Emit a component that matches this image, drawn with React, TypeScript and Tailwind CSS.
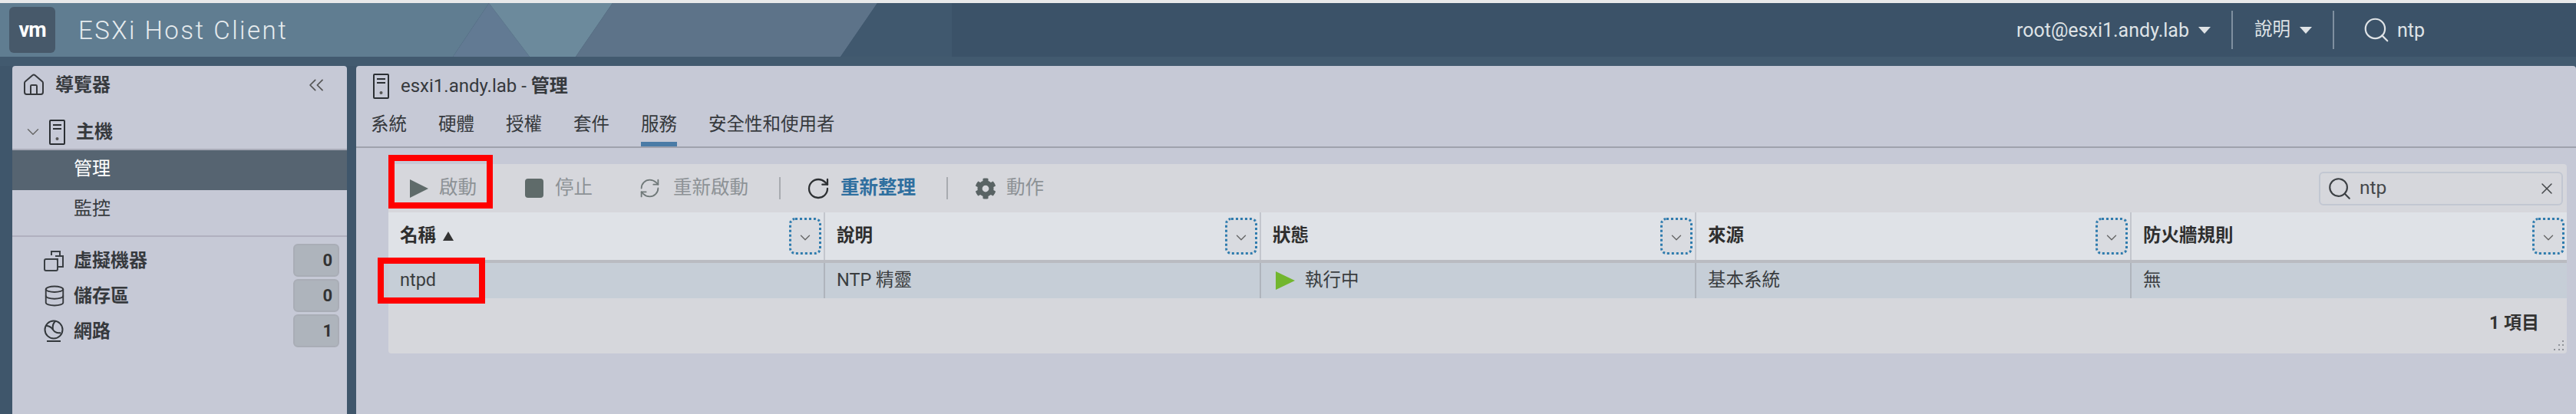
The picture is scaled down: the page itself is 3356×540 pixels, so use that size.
import { ChevronDown, ChevronsLeft, Database, House, RefreshCw, RotateCw, Search, X } from 'lucide-react'
import { FaCog } from 'react-icons/fa'

const FONT = "font-['Roboto','Noto_Sans_CJK_TC',sans-serif]"

function ServerIcon() {
  return (
    <svg width="21" height="33" viewBox="0 0 21 33" fill="none" stroke="#2b2f33" strokeWidth="2">
      <rect x="1" y="1" width="19" height="31" rx="1" />
      <path d="M5 7h11M5 12h11" />
      <circle cx="10.5" cy="25" r="2" fill="#555" stroke="none" />
    </svg>
  )
}

function VmIcon() {
  return (
    <svg width="28" height="28" viewBox="0 0 28 28" fill="none" stroke="#3a3f44" strokeWidth="2">
      <path d="M11 7V2h11v6" />
      <path d="M16 8h10v14h-6" />
      <rect x="2" y="12" width="17" height="15" rx="2" />
      <path d="M10 12h9v9" />
    </svg>
  )
}

function GlobeIcon() {
  return (
    <svg width="28" height="30" viewBox="0 0 28 30" fill="none" stroke="#33383c" strokeWidth="2">
      <circle cx="14" cy="13" r="11.5" />
      <path d="M4 8c5 0 7 2 9 5s5 5 10 4" />
      <path d="M16 2c-3 3-4 6-3 11" />
      <path d="M5 28h18" />
    </svg>
  )
}

function SortBtn() {
  return (
    <div className="flex h-[48px] w-[42px] items-center justify-center rounded-lg border-[3px] border-dotted border-[#2f7cae] bg-[#d9dbe0] pt-[4px]">
      <ChevronDown size={22} strokeWidth={1.5} className="text-[#666]" />
    </div>
  )
}

function HeaderCell({ label, sorted, last }: { label: string; sorted?: boolean; last?: boolean }) {
  return (
    <div className={`flex items-center justify-between pl-[15px] pr-[3px] ${last ? '' : 'border-r-2 border-[#c3c6cd]'}`}>
      <div className="flex items-center gap-[9px] text-[23.5px] leading-none font-bold text-[#2e2e2e]">
        {label}
        {sorted && <span className="h-0 w-0 border-x-[7px] border-b-[12px] border-x-transparent border-b-[#333]" />}
      </div>
      <SortBtn />
    </div>
  )
}

function RowCell({ children, last }: { children: React.ReactNode; last?: boolean }) {
  return (
    <div className={`flex items-center pl-[15px] text-[23.5px] leading-none text-[#3a3d40] ${last ? '' : 'border-r-2 border-[#afb4bc]'}`}>
      {children}
    </div>
  )
}

function NavCount({ icon, label, count }: { icon: React.ReactNode; label: string; count: number }) {
  return (
    <div className="flex h-[43px] items-center pl-[40px] pr-[10px]">
      <div className="flex w-[40px] items-center">{icon}</div>
      <span className="text-[24px] leading-none font-bold text-[#36393d]">{label}</span>
      <div className="ml-auto flex h-[43px] w-[60px] items-center justify-end rounded-md border-2 border-[#a9adb6] bg-[#aeb4bc] pr-[7px] text-[22px] font-bold text-[#333]">
        {count}
      </div>
    </div>
  )
}

export default function App() {
  const tabs = ['系統', '硬體', '授權', '套件', '服務', '安全性和使用者']

  return (
    <div className={`${FONT} flex h-[540px] w-[3356px] flex-col overflow-hidden bg-[#3f566b]`}>
      <div className="h-[4px] bg-[#e8e9ea]" />

      {/* top bar */}
      <header className="relative flex h-[70px] items-center bg-[#3b5268] pl-[12px] text-white">
        <svg className="absolute inset-0" width="3356" height="70" viewBox="0 0 3356 70">
          <polygon points="0,0 637,0 590,70 0,70" fill="#607d91" />
          <polygon points="637,0 690,70 590,70" fill="#627a93" />
          <polygon points="637,0 798,0 750,70 690,70" fill="#6c8a9c" />
          <polygon points="798,0 1143,0 1095,70 750,70" fill="#5d7389" />
          <polygon points="1143,0 1240,0 1240,70 1095,70" fill="#40586e" />
        </svg>
        <div className="relative flex h-[60px] w-[60px] items-center justify-center rounded-md bg-[#47596a] text-[27px] leading-none font-bold tracking-[-1px]">
          vm
        </div>
        <span className="relative ml-[30px] text-[33px] leading-none font-light tracking-[2.5px] text-[#e6ebee]">ESXi Host Client</span>
        <div className="relative ml-auto flex items-center pr-[197px] text-[23.5px] leading-none text-[#dfe3e6]">
          <span className="text-[25px]">root@esxi1.andy.lab</span>
          <span className="ml-[12px] h-0 w-0 border-x-[8px] border-t-[9px] border-x-transparent border-t-[#dfe3e6]" />
          <div className="ml-[27px] h-[50px] w-[2px] bg-[#7f90a0]" />
          <span className="ml-[28px]">說明</span>
          <span className="ml-[12px] h-0 w-0 border-x-[8px] border-t-[9px] border-x-transparent border-t-[#dfe3e6]" />
          <div className="ml-[27px] h-[50px] w-[2px] bg-[#7f90a0]" />
          <Search size={38} strokeWidth={1.4} className="ml-[36px]" />
          <span className="ml-[8px] text-[25px]">ntp</span>
        </div>
      </header>
      <div className="h-[12px] bg-[#425a6f]" />

      <div className="flex flex-1 pl-[16px]">
        {/* navigator */}
        <aside className="w-[436px] rounded-t-sm bg-[#c6c9d6] text-[#36393d]">
          <div className="flex h-[50px] items-center pl-[12px] pr-[24px]">
            <House size={32} strokeWidth={1.5} />
            <span className="ml-[12px] text-[24px] leading-none font-bold">導覽器</span>
            <ChevronsLeft size={32} strokeWidth={1.3} className="ml-auto text-[#555]" />
          </div>
          <div className="flex h-[58px] items-center pl-[14px] pt-[14px]">
            <ChevronDown size={26} strokeWidth={1.3} className="text-[#666]" />
            <div className="ml-[8px]"><ServerIcon /></div>
            <span className="ml-[14px] text-[24px] leading-none font-bold">主機</span>
          </div>
          <div className="flex h-[54px] items-center border-t-2 border-[#a9abb8] bg-[#566471] pb-[5px] pl-[80px] text-[24px] leading-none text-white">管理</div>
          <div className="flex h-[61px] items-center border-b-2 border-[#b0b0bf] pb-[12px] pl-[80px] text-[24px] leading-none">監控</div>
          <div className="mt-[9px] flex flex-col gap-[3px]">
            <NavCount icon={<VmIcon />} label="虛擬機器" count={0} />
            <NavCount icon={<Database size={30} strokeWidth={1.5} />} label="儲存區" count={0} />
            <NavCount icon={<GlobeIcon />} label="網路" count={1} />
          </div>
        </aside>

        {/* main */}
        <main className="relative ml-[12px] flex-1 rounded-t-sm bg-[#c6c9d6] text-[#36393d]">
          <div className="flex h-[50px] items-center pl-[22px] pt-[2px]">
            <ServerIcon />
            <span className="ml-[15px] text-[24px] leading-none">esxi1.andy.lab - <span className="font-bold">管理</span></span>
          </div>
          <nav className="flex h-[55px] gap-[41px] pl-[19px]">
            {tabs.map((t) => (
              <div key={t} className={`flex items-center border-b-[6px] pt-[5px] text-[23.5px] leading-none ${t === '服務' ? 'border-[#4a7ba6]' : 'border-transparent'}`}>
                {t}
              </div>
            ))}
          </nav>
          <div className="h-[2px] bg-[#9fa2ad]" />

          <section className="mt-[21px] ml-[42px] h-[247px] w-[2838px] rounded-sm bg-[#d6d7dc]">
            {/* toolbar */}
            <div className="flex h-[63px] items-center pl-[28px] pr-[5px] text-[24.5px] leading-none text-[#8d9296]">
              <span className="h-0 w-0 border-y-[12px] border-l-[24px] border-y-transparent border-l-[#5f6b6a]" />
              <span className="ml-[14px]">啟動</span>
              <span className="ml-[63px] h-[25px] w-[24px] rounded-sm bg-[#5f6b6a]" />
              <span className="ml-[15px]">停止</span>
              <RefreshCw size={29} strokeWidth={1.5} className="ml-[60px] text-[#6f7878]" />
              <span className="ml-[16px]">重新啟動</span>
              <div className="ml-[40px] h-[29px] w-[2px] bg-[#a8abb0]" />
              <RotateCw size={32} strokeWidth={1.7} className="ml-[33px] text-[#2d3033]" />
              <span className="ml-[13px] font-bold text-[#2f6f9f]">重新整理</span>
              <div className="ml-[40px] h-[29px] w-[2px] bg-[#a8abb0]" />
              <FaCog size={28} className="ml-[35px] text-[#596364]" />
              <span className="ml-[13px]">動作</span>
              <div className="ml-auto flex h-[44px] w-[318px] items-center rounded-md border-2 border-[#c2c7d2] pl-[8px] pr-[7px] text-[#44474a]">
                <Search size={34} strokeWidth={1.5} className="text-[#3c4044]" />
                <span className="ml-[9px]">ntp</span>
                <X size={24} strokeWidth={1.5} className="ml-auto" />
              </div>
            </div>

            {/* grid */}
            <div className="grid h-[66px] grid-cols-[569px_568px_567px_567px_567px] border-b-4 border-[#b9bbc1] bg-[#dfe2e7]">
              <HeaderCell label="名稱" sorted />
              <HeaderCell label="說明" />
              <HeaderCell label="狀態" />
              <HeaderCell label="來源" />
              <HeaderCell label="防火牆規則" last />
            </div>
            <div className="grid h-[46px] grid-cols-[569px_568px_567px_567px_567px] bg-[#c6ced7]">
              <RowCell>ntpd</RowCell>
              <RowCell>NTP 精靈</RowCell>
              <RowCell>
                <span className="ml-[4px] h-0 w-0 border-y-[12px] border-l-[25px] border-y-transparent border-l-[#72b62e]" />
                <span className="ml-[13px]">執行中</span>
              </RowCell>
              <RowCell>基本系統</RowCell>
              <RowCell last>無</RowCell>
            </div>
            <div className="relative flex h-[72px] items-start justify-end pr-[36px] pt-[21px] text-[23px] leading-none font-bold text-[#333]">
              1 項目
              <svg className="absolute right-[3px] bottom-[3px]" width="16" height="14" viewBox="0 0 16 14" fill="#8f9298">
                <rect x="13" y="0" width="2" height="2" />
                <rect x="8" y="5" width="2" height="2" />
                <rect x="13" y="5" width="2" height="2" />
                <rect x="2" y="11" width="2" height="2" />
                <rect x="8" y="11" width="2" height="2" />
                <rect x="13" y="11" width="2" height="2" />
              </svg>
            </div>
          </section>

          {/* annotation boxes */}
          <div className="absolute left-[42px] top-[116px] h-[70px] w-[136px] border-8 border-[#ff0000]" />
          <div className="absolute left-[28px] top-[250px] h-[60px] w-[140px] border-8 border-[#ff0000]" />
        </main>
      </div>
    </div>
  )
}
